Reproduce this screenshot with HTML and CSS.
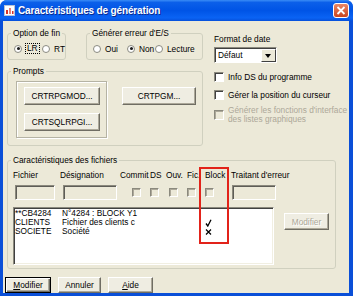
FILE: index.html
```html
<!DOCTYPE html>
<html lang="fr">
<head>
    <meta charset="UTF-8">
    <title>Caractéristiques de génération</title>
    <link rel="stylesheet" href="styles.css">
</head>
<body>
<div class="window">
    <div class="titlebar">
        <svg class="app-icon" width="11" height="11" viewBox="0 0 11 11">
            <rect x="0.5" y="0.5" width="10" height="10" fill="#fff" stroke="#b9c4d6"/>
            <rect x="2" y="5" width="2" height="4" fill="#d8342a"/>
            <rect x="5" y="3" width="2" height="6" fill="#e97f76"/>
            <rect x="8" y="6" width="1.5" height="3" fill="#d8342a"/>
        </svg>
        <span class="title">Caractéristiques de génération</span>
        <span class="close">
            <svg width="16" height="15" viewBox="0 0 16 15">
                <defs>
                    <linearGradient id="cg" x1="0" y1="0" x2="0" y2="1">
                        <stop offset="0" stop-color="#ec8a68"/>
                        <stop offset="1" stop-color="#c8421c"/>
                    </linearGradient>
                </defs>
                <rect x="0.5" y="0.5" width="15" height="14" rx="2.5" fill="url(#cg)" stroke="#fff"/>
                <path d="M4.5 4 L11.5 11 M11.5 4 L4.5 11" stroke="#fff" stroke-width="1.8"/>
            </svg>
        </span>
    </div>

    <div class="client">
        <div class="top">
            <div class="left-col">
                <div class="row">
                    <fieldset class="group group-fin">
                        <legend>Option de fin</legend>
                        <div class="radios">
                            <label class="opt opt-lr"><span class="radio checked"></span><span class="focus">LR</span></label>
                            <label class="opt"><span class="radio"></span>RT</label>
                        </div>
                    </fieldset>
                    <fieldset class="group group-err">
                        <legend>Générer erreur d'E/S</legend>
                        <div class="radios">
                            <label class="opt opt-oui"><span class="radio"></span>Oui</label>
                            <label class="opt opt-non"><span class="radio checked"></span>Non</label>
                            <label class="opt"><span class="radio"></span>Lecture</label>
                        </div>
                    </fieldset>
                </div>
                <fieldset class="group group-prompts">
                    <legend>Prompts</legend>
                    <div class="prompts-body">
                        <div class="frame">
                            <button class="btn btn-prompt">CRTRPGMOD...</button>
                            <button class="btn btn-prompt">CRTSQLRPGI...</button>
                        </div>
                        <button class="btn btn-prompt btn-pgm">CRTPGM...</button>
                    </div>
                </fieldset>
            </div>

            <div class="right-col">
                <div class="label">Format de date</div>
                <div class="select">
                    <span class="select-value">Défaut</span>
                    <span class="select-arrow"></span>
                </div>
                <label class="check check-1"><span class="box"></span>Info DS du programme</label>
                <label class="check check-2"><span class="box"></span>Gérer la position du curseur</label>
                <label class="check check-3 disabled"><span class="box"></span><span>Générer les fonctions d'interface<br>des listes graphiques</span></label>
            </div>
        </div>

        <fieldset class="group group-files">
            <legend>Caractéristiques des fichiers</legend>
            <div class="files-body">
                <div class="cols heads">
                    <span>Fichier</span>
                    <span>Désignation</span>
                    <span>Commit</span>
                    <span>DS</span>
                    <span>Ouv.</span>
                    <span>Fic.</span>
                    <span>Block</span>
                    <span>Traitant d'erreur</span>
                </div>
                <div class="cols inputs">
                    <span class="field f-fichier"></span>
                    <span class="field f-desig"></span>
                    <span class="mini m-commit"></span>
                    <span class="mini"></span>
                    <span class="mini m-ouv"></span>
                    <span class="mini"></span>
                    <span class="mini"></span>
                    <span class="field f-trait"></span>
                </div>
                <div class="list-row">
                    <div class="listbox">
                        <div class="item"><span class="c1">**CB4284</span><span class="c2">N°4284 : BLOCK Y1</span></div>
                        <div class="item"><span class="c1">CLIENTS</span><span class="c2">Fichier des clients c</span>
                            <svg class="mark" width="7" height="8" viewBox="0 0 7 8"><path d="M1 4.5 L2.8 7 L6 0.8" fill="none" stroke="#000" stroke-width="1.3"/></svg>
                        </div>
                        <div class="item"><span class="c1">SOCIETE</span><span class="c2">Société</span>
                            <svg class="mark" width="7" height="8" viewBox="0 0 7 8"><path d="M1 1.5 L6 6.5 M6 1.5 L1 6.5" fill="none" stroke="#000" stroke-width="1.2"/></svg>
                        </div>
                    </div>
                    <button class="btn btn-edit" disabled>Modifier</button>
                </div>
                <div class="highlight"></div>
            </div>
        </fieldset>

        <div class="actions">
            <button class="btn btn-default"><u>M</u>odifier</button>
            <button class="btn btn-cancel">Annuler</button>
            <button class="btn btn-help"><u>A</u>ide</button>
        </div>
    </div>
</div>
</body>
</html>
```

FILE: styles.css
```css
body {
    margin: 0;
    background: #fff;
    font-family: "Liberation Sans", Arial, sans-serif;
    font-size: 8.3px;
    color: #000;
}
.window {
    width: 353px;
    height: 296px;
    display: flex;
    flex-direction: column;
    background: #0a4fd8;
    border-radius: 7px 7px 0 0;
    overflow: hidden;
}
.titlebar {
    height: 21px;
    flex: none;
    display: flex;
    align-items: center;
    padding: 0 4px;
    background: linear-gradient(#3a8cf6 0%, #0b5fe9 12%, #0054e6 50%, #0a63f4 85%, #0650db 100%);
    color: #fff;
}
.app-icon {
    margin-right: 3px;
}
.title {
    flex: 1;
    font-weight: bold;
    font-size: 10px;
    letter-spacing: -0.15px;
    text-shadow: 1px 1px #0b2b8f;
}
.close svg {
    display: block;
}
.client {
    flex: 1;
    margin: 0 4px 3px 3px;
    background: #ece9d8;
}

/* group boxes */
.group {
    margin: 0;
    padding: 0;
    min-width: 0;
    box-sizing: border-box;
    border: 1px solid #d0d0bf;
    border-radius: 3px;
}
.group legend {
    margin-left: 3px;
    padding: 0 2px;
    line-height: 10px;
}
.top {
    display: flex;
    padding-left: 4px;
}
.left-col {
    width: 196px;
}
.row {
    display: flex;
    gap: 20px;
    margin-top: 7px;
}
.group-fin {
    width: 59px;
    height: 32px;
}
.group-err {
    width: 117px;
    height: 32px;
}
.radios {
    display: flex;
    padding: 5px 0 0 6px;
}
.opt {
    display: flex;
    align-items: center;
    height: 11px;
}
.opt-lr { width: 32px; }
.opt-oui { width: 34px; }
.opt-non { width: 28px; }
.radio {
    width: 8px;
    height: 8px;
    box-sizing: border-box;
    margin-right: 4px;
    border: 1px solid #8a8a80;
    border-radius: 50%;
    background: #fff;
    position: relative;
}
.radio.checked::after {
    content: "";
    position: absolute;
    left: 1.5px;
    top: 1.5px;
    width: 3px;
    height: 3px;
    border-radius: 50%;
    background: #1e1e1e;
}
.opt-lr .radio {
    margin-right: 3px;
}
.focus {
    border: 1px dotted #000;
    line-height: 9px;
    padding: 0 1px;
}

/* prompts */
.group-prompts {
    margin-top: 6px;
    width: 196px;
    height: 80px;
}
.prompts-body {
    display: flex;
    align-items: flex-start;
    padding: 5px 0 0 8px;
}
.frame {
    width: 91px;
    height: 57px;
    box-sizing: border-box;
    display: flex;
    flex-direction: column;
    gap: 8px;
    padding: 5px 0 0 7px;
    border: 1px solid #b5b3a4;
    box-shadow: inset 1px 1px #fff, 1px 1px #fff;
}
.btn {
    font: inherit;
    color: #000;
    padding: 0;
    box-sizing: border-box;
    background: #efede2;
    border: 1px solid;
    border-color: #fff #6f6d63 #6f6d63 #fff;
    box-shadow: inset -1px -1px #aca899;
}
.btn-prompt {
    width: 76px;
    height: 18px;
}
.btn-pgm {
    width: 74px;
    margin: 6px 0 0 15px;
}

/* right column */
.right-col {
    margin-left: 11px;
    padding-top: 13px;
}
.label {
    line-height: 10px;
}
.select {
    margin-top: 3px;
    width: 63px;
    height: 16px;
    box-sizing: border-box;
    display: flex;
    background: #fff;
    border: 1px solid;
    border-color: #8b897d #fff #fff #8b897d;
    box-shadow: inset 1px 1px #404040;
    padding: 1px 0 0 1px;
}
.select-value {
    flex: 1;
    padding-left: 2px;
    line-height: 12px;
}
.select-arrow {
    width: 15px;
    height: 13px;
    box-sizing: border-box;
    background: #ece9d8;
    border: 1px solid;
    border-color: #fff #404040 #404040 #fff;
    position: relative;
}
.select-arrow::after {
    content: "";
    position: absolute;
    left: 3px;
    top: 4px;
    border-left: 3.5px solid transparent;
    border-right: 3.5px solid transparent;
    border-top: 4px solid #000;
}
.check {
    display: flex;
    align-items: center;
    gap: 4px;
    line-height: 9px;
}
.check .box {
    flex: none;
    width: 10px;
    height: 10px;
    box-sizing: border-box;
    background: #fff;
    border: 1px solid;
    border-color: #8b897d #fff #fff #8b897d;
    box-shadow: inset 1px 1px #404040;
}
.check-1 {
    margin-top: 9px;
    height: 10px;
}
.check-2 {
    margin-top: 8px;
    height: 10px;
}
.check-3 {
    margin-top: 6px;
}
.disabled {
    color: #aca899;
}
.disabled .box {
    background: #ece9d8;
    box-shadow: inset 1px 1px #aca899;
}

/* files */
.group-files {
    margin-top: 9px;
    margin-left: 4px;
    width: 329px;
    height: 114px;
}
.files-body {
    position: relative;
    padding: 5px 0 3px 5px;
}
.cols {
    display: grid;
    grid-template-columns: 47px 60px 30px 16px 21px 18px 26px 1fr;
    align-items: center;
}
.heads {
    line-height: 10px;
}
.inputs {
    margin-top: 5px;
    height: 15px;
}
.field {
    height: 15px;
    box-sizing: border-box;
    background: #ece9d8;
    border: 1px solid;
    border-color: #8b897d #fff #fff #8b897d;
    box-shadow: inset 1px 1px #5e5d57;
}
.f-fichier { margin-left: 2px; width: 40px; }
.f-desig { margin-left: 3px; width: 54px; }
.f-trait { margin-left: 1px; width: 44px; }
.mini {
    width: 9px;
    height: 9px;
    box-sizing: border-box;
    border: 1px solid;
    border-color: #8b897d #fff #fff #8b897d;
    box-shadow: inset 1px 1px #aca899;
}
.m-commit { margin-left: 12px; }
.m-ouv { margin-left: 3px; }
.list-row {
    display: flex;
    align-items: flex-start;
    margin-top: 7px;
}
.listbox {
    width: 261px;
    height: 58px;
    box-sizing: border-box;
    padding-top: 1px;
    background: #fff;
    border: 1px solid;
    border-color: #8b897d #fff #fff #8b897d;
    box-shadow: inset 1px 1px #404040, inset -1px -1px #f1efe2;
}
.item {
    display: flex;
    align-items: center;
    line-height: 9px;
    padding-left: 1px;
}
.c1 {
    width: 47px;
}
.c2 {
    width: 80px;
    white-space: nowrap;
}
.mark {
    margin-left: 63px;
}
.btn-edit {
    margin: 6px 0 0 10px;
    width: 45px;
    height: 17px;
    color: #aca899;
    text-shadow: 1px 1px #fff;
}
.highlight {
    position: absolute;
    left: 191px;
    top: 2px;
    width: 30px;
    height: 77px;
    box-sizing: border-box;
    border: 2px solid #e2231a;
}

/* bottom buttons */
.actions {
    display: flex;
    gap: 7px;
    margin-top: 8px;
    padding-left: 2px;
}
.actions .btn {
    height: 16px;
}
.btn-default {
    width: 46px;
    border-color: #000;
    box-shadow: inset 1px 1px #fff, inset -1px -1px #6f6d63, inset -2px -2px #aca899;
}
.btn-cancel { width: 43px; }
.btn-help { width: 45px; }
```
